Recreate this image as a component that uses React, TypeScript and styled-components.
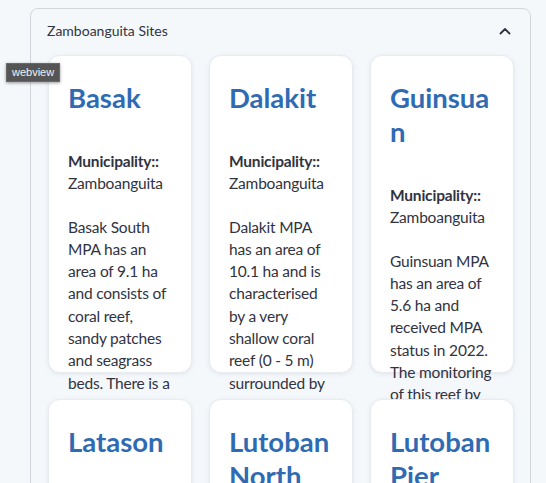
import React from "react";
import styled, { createGlobalStyle } from "styled-components";

const Global = createGlobalStyle`
  html, body { margin: 0; padding: 0; background: #f5f8fb; }
  body { font-family: Lato, "Noto Sans", sans-serif; color: #31333f; }
  * { box-sizing: border-box; }
`;

const Page = styled.div`
  position: relative;
  height: 483px;
  overflow: hidden;
  padding: 8px 15px 0 30px;
`;

const Expander = styled.section`
  border: 1px solid #d3d7dc;
  border-radius: 8px;
  background: #f5f8fb;
  min-height: 520px;
`;

const Header = styled.div`
  display: flex;
  align-items: center;
  justify-content: space-between;
  padding: 11px 19px 12px 16px;
  font-size: 14px;
  line-height: 22px;
  color: #31333f;
`;

const Grid = styled.div`
  display: grid;
  grid-template-columns: repeat(3, 144px);
  column-gap: 17px;
  row-gap: 26px;
  padding: 1px 0 0 17px;
`;

const Card = styled.div`
  position: relative;
  height: 318px;
  background: #ffffff;
  border: 1px solid #e8ecf1;
  border-radius: 12px;
  box-shadow: 0 1px 4px rgba(40, 60, 90, 0.1);
  padding: 25px 18px 0 19px;
`;

const Title = styled.h3`
  margin: 0 0 35px;
  font-size: 27.5px;
  line-height: 34px;
  font-weight: 700;
  color: #2f6bb3;
  overflow-wrap: anywhere;
`;

const Para = styled.p`
  margin: 0 0 21px;
  font-size: 15.5px;
  line-height: 22.3px;
  letter-spacing: -0.2px;
  color: #31333f;
`;

const Label = styled.strong`
  font-weight: 700;
`;

const Tooltip = styled.div`
  position: absolute;
  left: 6px;
  top: 63px;
  padding: 2px 5px 3px;
  background: #555555;
  border: 1px solid #6a6a6a;
  color: #f2f2f2;
  font-family: "Liberation Sans", Arial, sans-serif;
  font-size: 11px;
  line-height: 12px;
  box-shadow: 0 1px 3px rgba(0, 0, 0, 0.4);
`;

const Chevron = () => (
  <svg width="12" height="8" viewBox="0 0 12 8" aria-hidden="true">
    <polyline points="1.5,6.5 6,2 10.5,6.5" fill="none" stroke="#31333f" strokeWidth="1.8" strokeLinecap="round" strokeLinejoin="round" />
  </svg>
);

const sites = [
  { name: "Basak", desc: "Basak South MPA has an area of 9.1 ha and consists of coral reef, sandy patches and seagrass beds. There is a small reef crest area." },
  { name: "Dalakit", desc: "Dalakit MPA has an area of 10.1 ha and is characterised by a very shallow coral reef (0 - 5 m) surrounded by seagrass beds." },
  { name: "Guinsuan", desc: "Guinsuan MPA has an area of 5.6 ha and received MPA status in 2022. The monitoring of this reef by volunteers began earlier." },
  { name: "Latason", desc: "Latason MPA is a small protected area." },
  { name: "Lutoban North", desc: "Lutoban North MPA is a protected area." },
  { name: "Lutoban Pier", desc: "Lutoban Pier MPA is a protected area." },
];

export default function App() {
  return (
    <Page>
      <Global />
      <Expander>
        <Header>
          <span>Zamboanguita Sites</span>
          <Chevron />
        </Header>
        <Grid>
          {sites.map((s) => (
            <Card key={s.name}>
              <Title>{s.name}</Title>
              <Para>
                <Label>Municipality::</Label>
                <br />
                Zamboanguita
              </Para>
              <Para>{s.desc}</Para>
            </Card>
          ))}
        </Grid>
      </Expander>
      <Tooltip>webview</Tooltip>
    </Page>
  );
}
